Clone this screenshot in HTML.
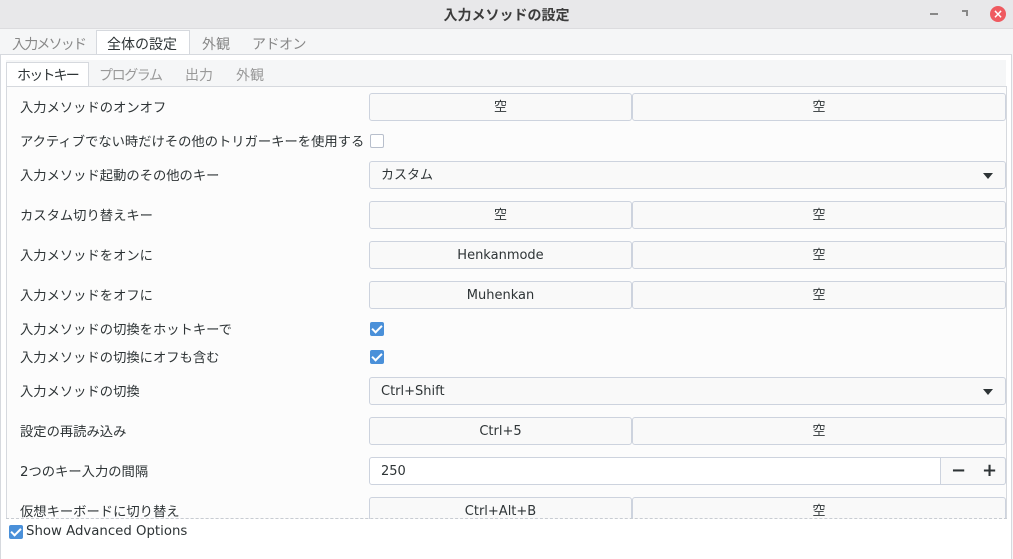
<html><head><style>
body{margin:0;width:1013px;height:559px;overflow:hidden;background:#f5f6f7;font-family:"DejaVu Sans","Noto Sans CJK JP",sans-serif;font-size:13.3px;color:#2e3436;position:relative}
.a{position:absolute}
.btn{position:absolute;border:1px solid #cdd3de;border-radius:3px;background:#f9f9f9;text-align:center;line-height:27px;box-sizing:border-box;height:28px;font-size:13px}
.lbl{position:absolute;left:20px}
.cb{position:absolute;left:370px;width:14px;height:14px;border-radius:2px;box-sizing:border-box}
.on{background:#4a90d9}
.on:after{content:"";position:absolute;left:4px;top:1px;width:4px;height:8px;border:solid #fff;border-width:0 2px 2px 0;transform:rotate(45deg)}
.tri{position:absolute;right:12px;top:11px;border-left:5px solid transparent;border-right:5px solid transparent;border-top:6px solid #2e3436}
.t{font-size:14px}
</style></head><body>
<div class="a" style="left:0;top:0;width:1013px;height:28px;background:#e8e8ea;border-bottom:1px solid #dcdcdf"></div>
<div class="a" style="left:0;top:5px;width:1013px;text-align:center;font-weight:bold;font-size:14px;color:#3c3c3c">入力メソッドの設定</div>
<div class="a" style="left:930px;top:13px;width:8px;height:2px;background:#888"></div>
<div class="a" style="left:962px;top:10px;width:6px;height:6px;border-top:2px solid #888;border-right:2px solid #888;box-sizing:border-box"></div>
<div class="a" style="left:990px;top:6px;width:16px;height:16px;border-radius:50%;background:#ef5a60;color:#fff;text-align:center;line-height:16px;font-size:12px;font-weight:bold">×</div>
<div class="a t" style="left:12px;top:34px;color:#888;letter-spacing:-1.8px">入力メソッド</div>
<div class="a" style="left:96px;top:30px;width:94px;height:25px;background:#fff;border:1px solid #d6d9de;border-bottom:none;box-sizing:border-box"></div>
<div class="a t" style="left:107px;top:34px">全体の設定</div>
<div class="a t" style="left:202px;top:34px;color:#888">外観</div>
<div class="a t" style="left:252px;top:34px;color:#888;letter-spacing:-0.5px">アドオン</div>
<div class="a" style="left:0;top:54px;width:1012px;height:505px;background:#fff;border:1px solid #d6d9de;border-bottom:none;box-sizing:border-box"></div>
<div class="a" style="left:6px;top:60px;width:1000px;height:27px;background:#f5f6f7"></div>
<div class="a" style="left:6px;top:62px;width:83px;height:25px;background:#fff;border:1px solid #d6d9de;border-bottom:none;box-sizing:border-box"></div>
<div class="a t" style="left:17px;top:65px;letter-spacing:-1.8px">ホットキー</div>
<div class="a t" style="left:99px;top:65px;color:#999;letter-spacing:-1.4px">プログラム</div>
<div class="a t" style="left:185px;top:65px;color:#999">出力</div>
<div class="a t" style="left:236px;top:65px;color:#999">外観</div>
<div class="a" style="left:6px;top:86px;width:1001px;height:433px;background:#fcfcfc;border:1px solid #d6d9de;border-bottom:1px dashed #c8ccd2;box-sizing:border-box"></div>
<div class="a" style="left:0;top:0;width:1013px;height:519px;overflow:hidden">
<div class="lbl" style="top:97px">入力メソッドのオンオフ</div>
<div class="btn" style="left:369px;top:93px;width:263px">空</div><div class="btn" style="left:632px;top:93px;width:374px">空</div>
<div class="lbl" style="top:131px">アクティブでない時だけその他のトリガーキーを使用する</div>
<div class="cb" style="top:134px;border:1px solid #b8bfcc;background:#fff"></div>
<div class="lbl" style="top:165px">入力メソッド起動のその他のキー</div>
<div class="btn" style="left:369px;top:161px;width:637px;text-align:left;padding-left:11px">カスタム<div class="tri"></div></div>
<div class="lbl" style="top:205px">カスタム切り替えキー</div>
<div class="btn" style="left:369px;top:201px;width:263px">空</div><div class="btn" style="left:632px;top:201px;width:374px">空</div>
<div class="lbl" style="top:245px">入力メソッドをオンに</div>
<div class="btn" style="left:369px;top:241px;width:263px">Henkanmode</div><div class="btn" style="left:632px;top:241px;width:374px">空</div>
<div class="lbl" style="top:285px">入力メソッドをオフに</div>
<div class="btn" style="left:369px;top:281px;width:263px">Muhenkan</div><div class="btn" style="left:632px;top:281px;width:374px">空</div>
<div class="lbl" style="top:319px">入力メソッドの切換をホットキーで</div>
<div class="cb on" style="top:322px"></div>
<div class="lbl" style="top:347px">入力メソッドの切換にオフも含む</div>
<div class="cb on" style="top:350px"></div>
<div class="lbl" style="top:381px">入力メソッドの切換</div>
<div class="btn" style="left:369px;top:377px;width:637px;text-align:left;padding-left:11px">Ctrl+Shift<div class="tri"></div></div>
<div class="lbl" style="top:421px">設定の再読み込み</div>
<div class="btn" style="left:369px;top:417px;width:263px">Ctrl+5</div><div class="btn" style="left:632px;top:417px;width:374px">空</div>
<div class="lbl" style="top:461px">2つのキー入力の間隔</div>
<div class="btn" style="left:369px;top:457px;width:637px;background:#fff;text-align:left;padding-left:11px">250</div>
<div class="btn" style="left:940px;top:457px;width:66px;border-radius:0 3px 3px 0;font-size:18px;font-weight:bold;line-height:25px"><span style="position:absolute;left:10px">−</span><span style="position:absolute;left:41px">+</span></div>
<div class="lbl" style="top:501px">仮想キーボードに切り替え</div>
<div class="btn" style="left:369px;top:497px;width:263px">Ctrl+Alt+B</div><div class="btn" style="left:632px;top:497px;width:374px">空</div>
</div>
<div class="a" style="left:6px;top:518px;width:1001px;border-top:1px dashed #c8ccd2"></div>
<div class="cb on" style="left:9px;top:525px"></div>
<div class="a" style="left:26px;top:524px;font-size:13.3px">Show Advanced Options</div>
</body></html>
